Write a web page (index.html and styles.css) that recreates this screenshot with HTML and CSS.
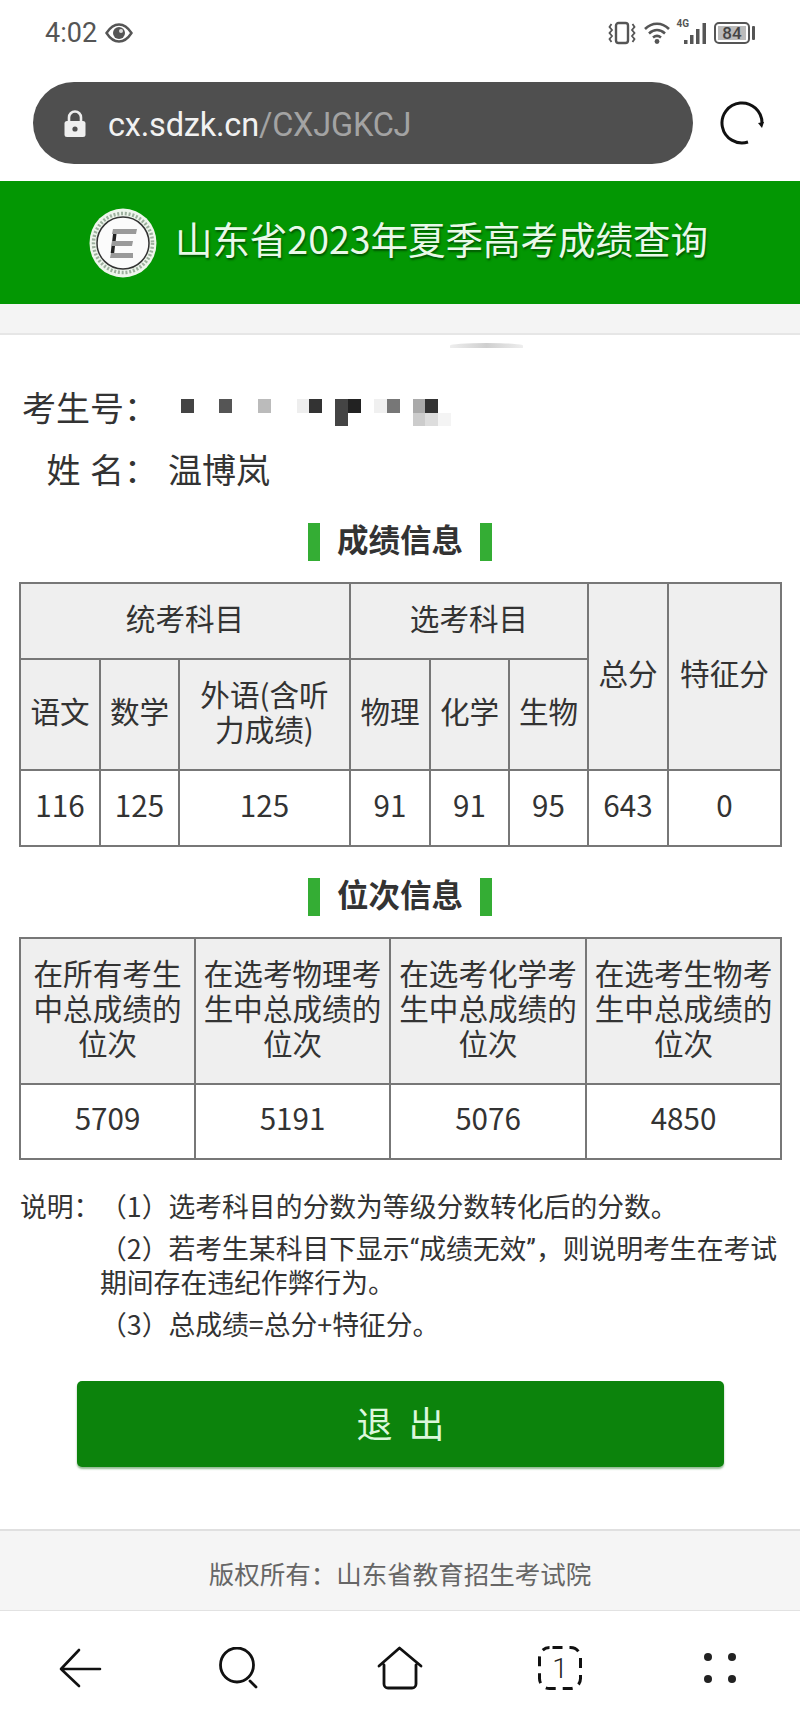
FILE: index.html
```html
<!DOCTYPE html>
<html lang="zh-CN">
<head>
<meta charset="utf-8">
<title>山东省2023年夏季高考成绩查询</title>
<link rel="stylesheet" href="styles.css">
</head>
<body>
<div class="phone">
  <div class="status">
    <div class="status-left">
      <span class="time">4:02</span>
      <svg class="eye" width="28" height="20" viewBox="0 0 28 20"><path d="M1.500 10 C6 3 10 1.500 14 1.500 S22 3 26.500 10 C22 17 18 18.500 14 18.500 S6 17 1.500 10Z" fill="none" stroke="#555" stroke-width="2.400"/><circle cx="14" cy="10" r="6" fill="#555"/><circle cx="16" cy="8" r="2" fill="#ddd"/></svg>
    </div>
    <div class="status-right">
      <svg class="vib" width="28" height="24" viewBox="0 0 28 24"><rect x="8" y="2" width="12" height="20" rx="2.500" fill="none" stroke="#555" stroke-width="2.400"/><path d="M3.500 3 L1.500 6 L4 9 L1.500 12 L4 15 L1.500 18 L3.500 21 M24.500 3 L26.500 6 L24 9 L26.500 12 L24 15 L26.500 18 L24.500 21" fill="none" stroke="#555" stroke-width="1.800"/></svg>
      <svg class="wifi" width="28" height="24" viewBox="0 0 28 24"><path d="M2 8 C9 1 19 1 26 8 M6 12.500 C11 8 17 8 22 12.500 M10 16.500 C12.500 14.500 15.500 14.500 18 16.500" fill="none" stroke="#555" stroke-width="2.600"/><circle cx="14" cy="20.500" r="2.400" fill="#555"/></svg>
      <span class="net">4G</span>
      <svg class="sig" width="24" height="22" viewBox="0 0 24 22"><path d="M1 22v-4h3.500v4zM7 22v-9h3.500v9zM13 22v-15h3.500v15zM19.500 22v-21h3.500v21z" fill="#555"/></svg>
      <span class="batt"><span class="batt-num">84</span></span>
      <span class="batt-tip"></span>
    </div>
  </div>

  <div class="addr">
    <div class="url">
      <svg class="lock" width="22" height="27" viewBox="0 0 22 27"><path d="M5 12V7.500a6 6 0 0 1 12 0V12" fill="none" stroke="#eee" stroke-width="2.600"/><rect x="0.500" y="11" width="21" height="16" rx="2.500" fill="#eee"/><circle cx="11" cy="19" r="2.600" fill="#4f4f4f"/></svg>
      <span class="url-text">cx.sdzk.cn<span class="url-path">/CXJGKCJ</span></span>
    </div>
    <svg class="reload" width="44" height="44" viewBox="0 0 44 44"><path d="M28 41 A20 20 0 1 1 42 22" fill="none" stroke="#111" stroke-width="3"/><path d="M38 22 L42 27 L44 21Z" fill="#111"/></svg>
  </div>

  <header class="banner">
    <svg class="logo" width="68" height="70" viewBox="0 0 68 70">
      <ellipse cx="34" cy="35" rx="33.500" ry="34.500" fill="#eef5ec"/>
      <circle cx="34" cy="35" r="29.500" fill="none" stroke="#9db09e" stroke-width="3.500" stroke-dasharray="2 1.800"/>
      <circle cx="34" cy="35" r="26" fill="#fbfbfb" stroke="#333" stroke-width="1.500"/>
      <path d="M24 21h24l-1 5H23zM23 33h21l-1 5H22zM22 45h22v5H21z" fill="#9a9a9a"/>
      <path d="M24 26h3.500l-.8 7h-3.500zM22.500 38h3.500l-.8 7h-3.500z" fill="#222"/>
    </svg>
    <h1 class="banner-title">山东省2023年夏季高考成绩查询</h1>
  </header>
  <div class="band"></div>
  <div class="smudge"></div>

  <main class="content">
    <div class="info-row">
      <span class="info-label">考生号&#xFF1A;</span>
      <svg class="mosaic" width="270" height="27" viewBox="0 0 270 27">
        <rect x="0" y="0" width="13" height="14" fill="#444"/>
        <rect x="38" y="0" width="13" height="14" fill="#555"/>
        <rect x="77" y="0" width="13" height="14" fill="#bbb"/>
        <rect x="116" y="0" width="12" height="14" fill="#eee"/>
        <rect x="128" y="0" width="13" height="14" fill="#333"/>
        <rect x="154" y="0" width="13" height="27" fill="#444"/>
        <rect x="167" y="0" width="13" height="14" fill="#222"/>
        <rect x="193" y="0" width="13" height="14" fill="#f0f0f0"/>
        <rect x="206" y="0" width="13" height="14" fill="#777"/>
        <rect x="232" y="0" width="12" height="14" fill="#aaa"/>
        <rect x="244" y="0" width="13" height="14" fill="#333"/>
        <rect x="232" y="14" width="12" height="13" fill="#ccc"/>
        <rect x="244" y="14" width="13" height="13" fill="#ddd"/>
        <rect x="257" y="14" width="13" height="13" fill="#f4f4f4"/>
      </svg>
    </div>
    <div class="info-row info-row-name">
      <span class="info-label">姓 名&#xFF1A;</span>
      <span class="info-value">温博岚</span>
    </div>

    <h2 class="sec-title first"><span class="sec-bar"></span><span class="sec-text">成绩信息</span><span class="sec-bar"></span></h2>
    <table class="grid scores">
      <colgroup>
        <col class="c80"><col class="c79"><col class="c171"><col class="c80"><col class="c79"><col class="c79"><col class="c80"><col class="c113">
      </colgroup>
      <tr class="r76">
        <th colspan="3">统考科目</th>
        <th colspan="3">选考科目</th>
        <th rowspan="2">总分</th>
        <th rowspan="2">特征分</th>
      </tr>
      <tr class="r111">
        <th>语文</th><th>数学</th><th>外语(含听<br>力成绩)</th>
        <th>物理</th><th>化学</th><th>生物</th>
      </tr>
      <tr class="r76">
        <td>116</td><td>125</td><td>125</td><td>91</td><td>91</td><td>95</td><td>643</td><td>0</td>
      </tr>
    </table>

    <h2 class="sec-title second"><span class="sec-bar"></span><span class="sec-text">位次信息</span><span class="sec-bar"></span></h2>
    <table class="grid ranks">
      <colgroup>
        <col class="c175"><col class="c195"><col class="c196"><col class="c195">
      </colgroup>
      <tr class="r146">
        <th>在所有考生<br>中总成绩的<br>位次</th>
        <th>在选考物理考<br>生中总成绩的<br>位次</th>
        <th>在选考化学考<br>生中总成绩的<br>位次</th>
        <th>在选考生物考<br>生中总成绩的<br>位次</th>
      </tr>
      <tr class="r75">
        <td>5709</td><td>5191</td><td>5076</td><td>4850</td>
      </tr>
    </table>

    <div class="notes">
      <span class="notes-label">说明&#xFF1A;</span>
      <div class="notes-body">
        <p>&#xFF08;1&#xFF09;选考科目的分数为等级分数转化后的分数&#x3002;</p>
        <p>&#xFF08;2&#xFF09;若考生某科目下显示<span class="quote">&#x201C;</span>成绩无效<span class="quote">&#x201D;</span>&#xFF0C;则说明考生在考试<br>期间存在违纪作弊行为&#x3002;</p>
        <p>&#xFF08;3&#xFF09;总成绩=总分+特征分&#x3002;</p>
      </div>
    </div>

    <button class="logout" type="button">退 出</button>
  </main>

  <footer class="copyright">版权所有&#xFF1A;山东省教育招生考试院</footer>

  <nav class="nav">
    <div class="nav-item"><svg width="44" height="40" viewBox="0 0 44 40"><path d="M21 2 L3 21 L21 38 M3 21 H42" fill="none" stroke="#111" stroke-width="2.600" stroke-linecap="round" stroke-linejoin="round"/></svg></div>
    <div class="nav-item"><svg width="42" height="42" viewBox="0 0 42 42"><ellipse cx="18" cy="18" rx="16.500" ry="17" fill="none" stroke="#111" stroke-width="2.800"/><path d="M31 34 L37 40" stroke="#111" stroke-width="2.800" stroke-linecap="round"/></svg></div>
    <div class="nav-item"><svg width="46" height="44" viewBox="0 0 46 44"><path d="M2 20 L22.500 2 L44 20 M7 19 V38 a4 4 0 0 0 4 4 H35 a4 4 0 0 0 4 -4 V19" fill="none" stroke="#111" stroke-width="2.800" stroke-linecap="round" stroke-linejoin="round"/></svg></div>
    <div class="nav-item"><svg class="tabs" width="44" height="44" viewBox="0 0 44 44"><rect x="1.500" y="1.500" width="41" height="41" rx="10" fill="none" stroke="#111" stroke-width="3" stroke-dasharray="10 7" stroke-dashoffset="-3"/><text x="22" y="32" text-anchor="middle" class="tabs-num">1</text></svg></div>
    <div class="nav-item"><svg width="34" height="32" viewBox="0 0 34 32"><circle cx="5" cy="5" r="4" fill="#222"/><circle cx="29" cy="5" r="4" fill="#222"/><circle cx="5" cy="27" r="4" fill="#222"/><circle cx="29" cy="27" r="4" fill="#222"/></svg></div>
  </nav>
</div>
</body>
</html>
```

FILE: styles.css
```css
* { box-sizing: border-box; }
html, body { margin: 0; padding: 0; background: #fff; }
body { font-family: "Noto Sans CJK SC", "Noto Sans", sans-serif; color: #333; }
.phone { width: 800px; height: 1726px; overflow: hidden; }

.status { height: 66px; padding: 0 45px; display: flex; align-items: center; justify-content: space-between; }
.status-left { display: flex; align-items: center; gap: 8px; }
.time { font-family: Roboto, sans-serif; font-size: 27px; line-height: 32px; color: #555; }
.status-right { display: flex; align-items: center; }
.vib { margin-right: 7px; }
.wifi { margin-right: 5px; }
.net { font-family: Roboto, sans-serif; font-size: 10px; font-weight: 700; color: #555; align-self: flex-start; margin-top: -3px; margin-right: -6px; }
.sig { margin-right: 7px; }
.batt { width: 36px; height: 22px; border: 2px solid #555; border-radius: 5px; padding: 2px; display: flex; }
.batt-num { flex: 1; background: #bbb; font-family: Roboto, sans-serif; font-size: 17px; line-height: 14px; text-align: center; color: #444; font-weight: 500; }
.batt-tip { width: 3px; height: 14px; background: #555; margin-left: 2px; border-radius: 1px; }

.addr { margin-top: 16px; height: 82px; padding: 0 36px 0 33px; display: flex; align-items: center; justify-content: space-between; }
.url { width: 660px; height: 82px; border-radius: 41px; background: #4f4f4f; padding-left: 31px; display: flex; align-items: center; gap: 22px; }
.url-text { font-family: Roboto, sans-serif; font-size: 32.500px; letter-spacing: -0.2px; color: #f2f2f2; padding-top: 3px; }
.url-path { color: #a3a3a3; }

.banner { margin-top: 17px; height: 123px; background: #039703; display: flex; align-items: center; justify-content: center; gap: 18px; padding-right: 3px; box-shadow: 0 1px 1px #7fd07f; }
.banner-title { margin: 0 0 10px; font-size: 37.500px; line-height: 46px; font-weight: 400; color: #e9f9e9; text-shadow: 1px 2px 2px rgba(0, 50, 0, 0.65); }
.band { height: 31px; background: #f4f4f4; border-bottom: 2px solid #e6e6e6; }
.smudge { width: 73px; height: 5px; margin: 8px 0 0 450px; border-radius: 50% 50% 0 0; background: linear-gradient(90deg, #eee, #cfcfcf 50%, #eee); }

.content { padding: 0 19px; }
.info-row { display: flex; align-items: flex-start; height: 40px; margin-top: 39px; font-size: 34px; line-height: 40px; }
.info-row-name { margin-top: 22px; }
.info-label { width: 139px; text-align: right; white-space: pre; word-spacing: 2px; flex: none; }
.info-value { margin-left: 10px; }
.mosaic { margin: 12px 0 0 23px; }

.sec-title { margin: 0; height: 38px; display: flex; align-items: center; justify-content: center; gap: 17px; font-size: 31.500px; line-height: 38px; font-weight: 700; color: #333; }
.sec-title.first { margin-top: 34px; }
.sec-title.second { margin-top: 31px; }
.sec-bar { width: 12px; height: 38px; background: #34ad34; }
.sec-text { margin-top: -8px; }

.grid { width: 761px; margin-top: 21px; table-layout: fixed; border-collapse: collapse; font-size: 29.600px; line-height: 35px; color: #333; }
.grid th, .grid td { border: 2px solid #777; padding: 0 0 8px; text-align: center; font-weight: 400; }
.grid th { background: #efefef; }
.grid td { background: #fff; }
.c80 { width: 80px; } .c79 { width: 79px; } .c171 { width: 171px; } .c113 { width: 113px; }
.c175 { width: 175px; } .c195 { width: 195px; } .c196 { width: 196px; }
.r76 { height: 76px; } .r111 { height: 111px; } .r146 { height: 146px; } .r75 { height: 75px; }

.notes { display: flex; margin-top: 30px; margin-left: 1px; font-size: 26.800px; line-height: 32px; color: #333; white-space: nowrap; }
.notes-label { width: 80px; flex: none; }
.notes-body p { margin: 0 0 10px; }
.notes-body p:last-child { margin-bottom: 0; }
.quote { font-family: Roboto, sans-serif; }

.logout { display: block; width: 647px; height: 86px; margin: 41px 0 0 58px; padding: 0 0 4px; border: 0; border-radius: 5px; background: #0c830c; color: #dcf7dc; font-family: inherit; font-size: 36px; word-spacing: 8px; box-shadow: 0 2px 2px rgba(40, 120, 40, 0.5); }

.copyright { margin-top: 62px; height: 82px; background: #f5f5f5; border-top: 2px solid #e0e0e0; border-bottom: 1px solid #e2e2e2; font-size: 25.500px; line-height: 83px; text-align: center; color: #666; }

.nav { height: 113px; display: flex; }
.nav-item { flex: 1; height: 114px; display: flex; align-items: center; justify-content: center; }
.tabs-num { font-family: Roboto, sans-serif; font-size: 28px; font-weight: 300; fill: #222; }
```
